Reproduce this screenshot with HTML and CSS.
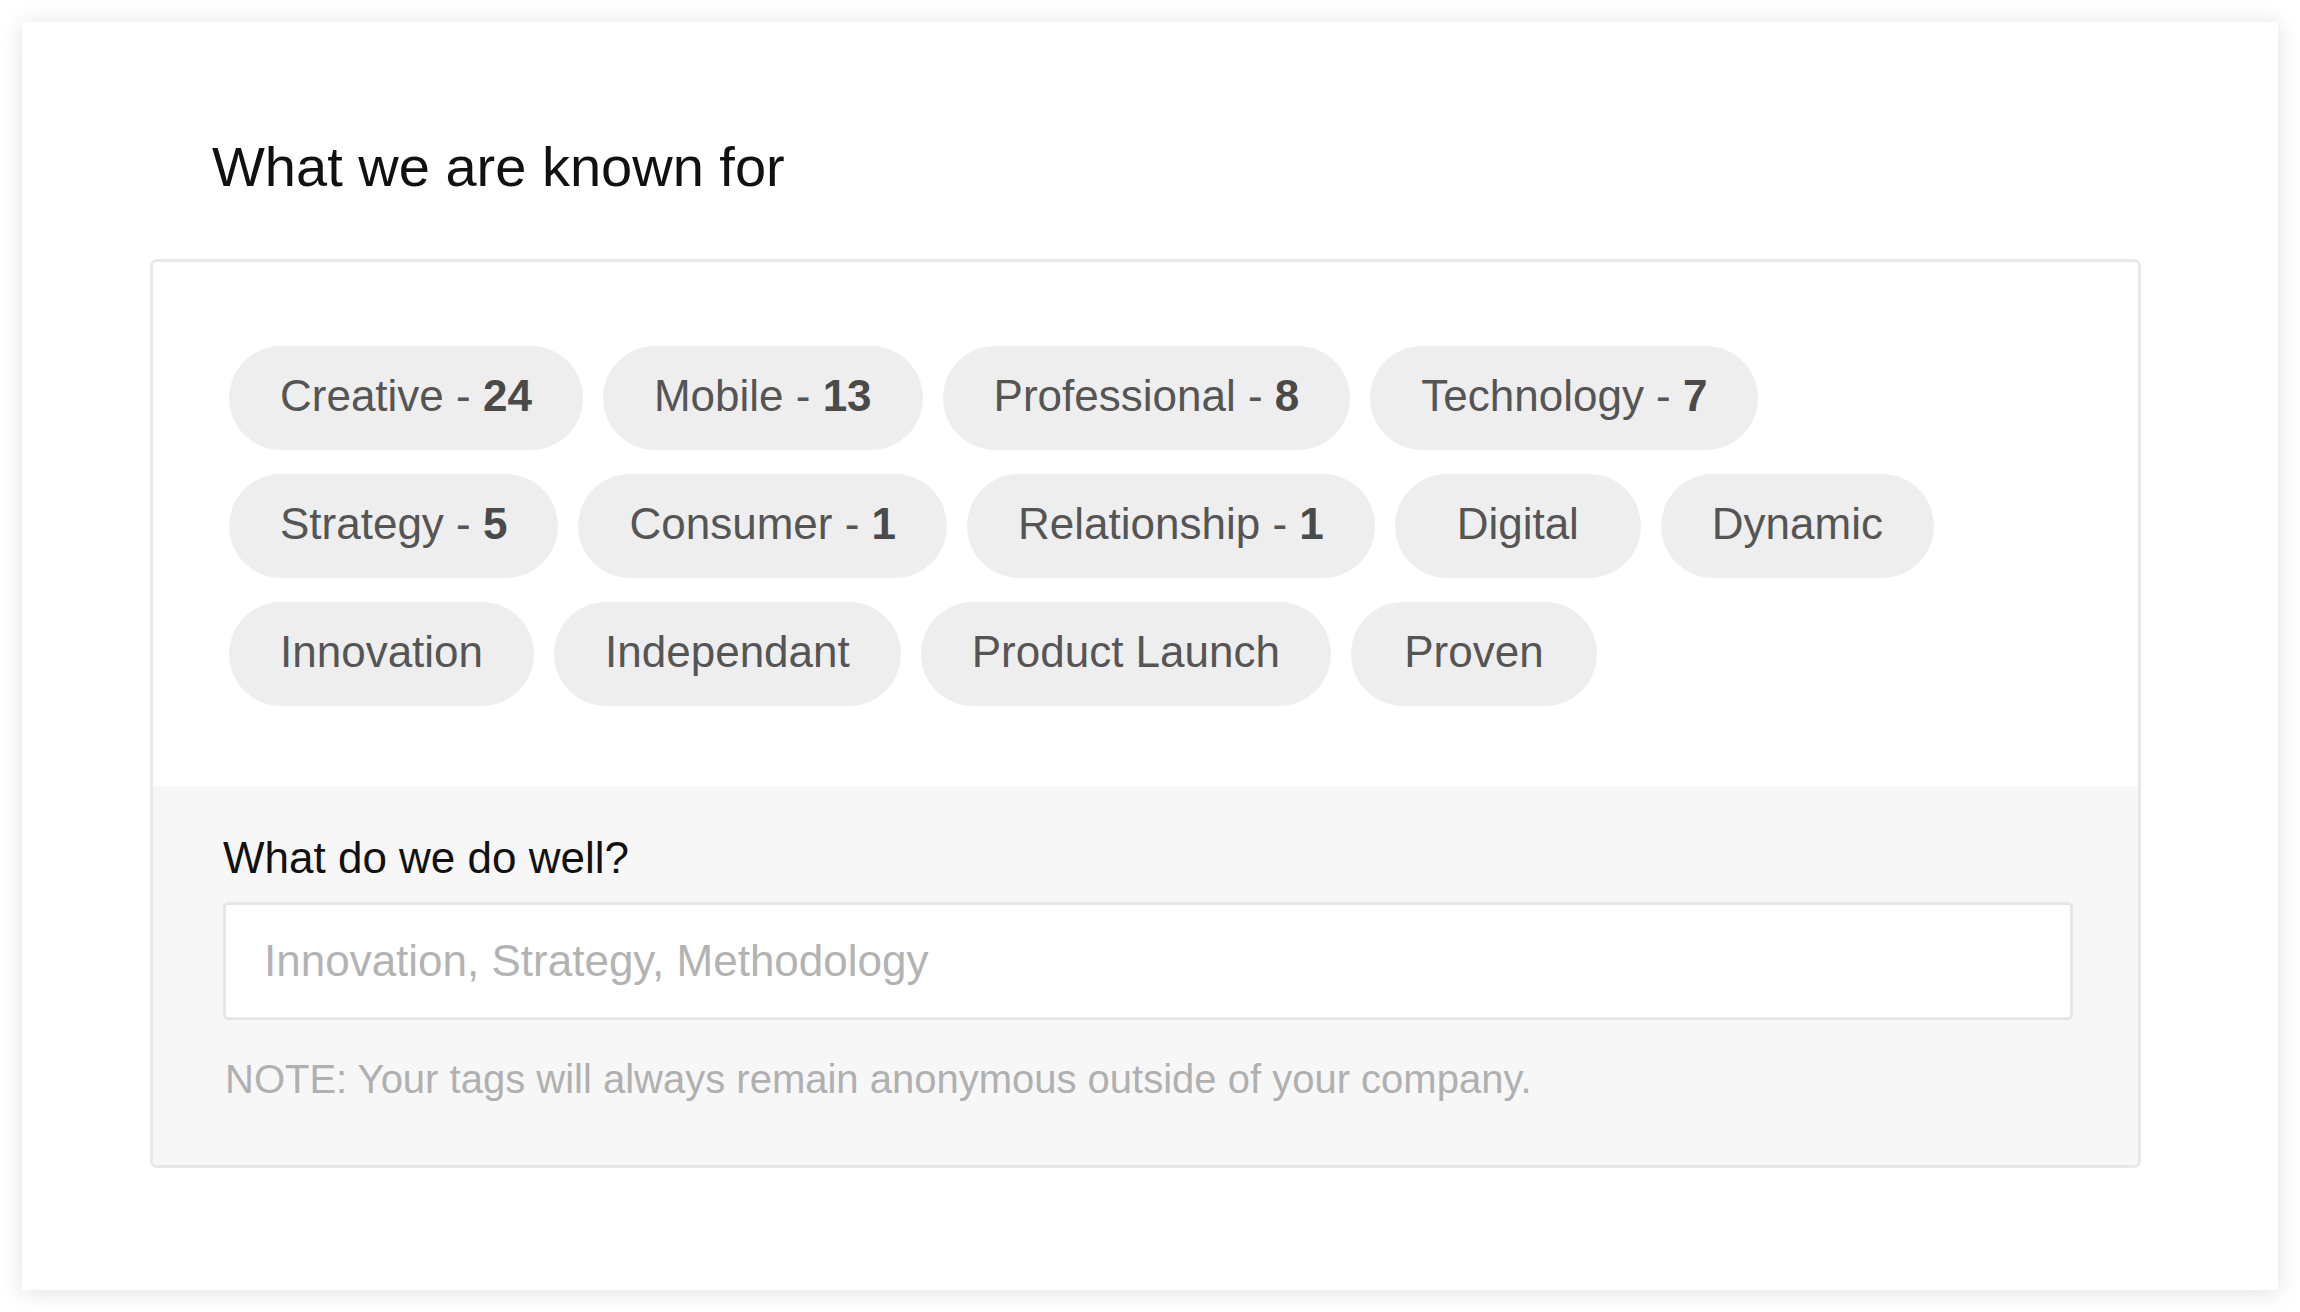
FILE: index.html
```html
<!DOCTYPE html>
<html lang="en">
<head>
<meta charset="utf-8">
<title>What we are known for</title>
<link rel="stylesheet" href="styles.css">
</head>
<body>
<main class="card">
  <h1 class="title">What we are known for</h1>
  <section class="panel">
    <div class="tags">
      <span class="tag">Creative - <b>24</b></span>
      <span class="tag">Mobile - <b>13</b></span>
      <span class="tag">Professional - <b>8</b></span>
      <span class="tag">Technology - <b>7</b></span>
      <span class="tag">Strategy - <b>5</b></span>
      <span class="tag">Consumer - <b>1</b></span>
      <span class="tag">Relationship - <b>1</b></span>
      <span class="tag">Digital</span>
      <span class="tag">Dynamic</span>
      <span class="tag">Innovation</span>
      <span class="tag">Independant</span>
      <span class="tag">Product Launch</span>
      <span class="tag">Proven</span>
    </div>
    <div class="entry">
      <label class="label" for="well">What do we do well?</label>
      <input class="field" id="well" type="text" placeholder="Innovation, Strategy, Methodology">
      <p class="note">NOTE: Your tags will always remain anonymous outside of your company.</p>
    </div>
  </section>
</main>
</body>
</html>
```

FILE: styles.css
```css
* { box-sizing: border-box; }

html, body {
  margin: 0;
  background: #ffffff;
}

body {
  padding: 22px;
  font-family: "Liberation Sans", Arial, Helvetica, sans-serif;
}

.card {
  width: 2256px;
  background: #ffffff;
  box-shadow: 0 2px 22px rgba(0, 0, 0, 0.13);
  padding: 117px 137px 122px 128px;
}

.title {
  margin: 0 0 64px 62px;
  font-size: 56px;
  line-height: 56px;
  font-weight: 400;
  color: #111111;
}

.panel {
  border: 3px solid #e8e8e8;
  border-radius: 7px;
  overflow: hidden;
  background: #ffffff;
}

.tags {
  display: flex;
  flex-wrap: wrap;
  column-gap: 20px;
  row-gap: 24px;
  padding: 84px 150px 80px 76px;
}

.tag {
  display: inline-flex;
  align-items: center;
  justify-content: center;
  height: 104px;
  min-width: 246px;
  padding: 0 51px 4px;
  border-radius: 52px;
  background: #eeeeee;
  color: #555555;
  font-size: 44px;
  line-height: 1;
  white-space: pre;
}

.tag b {
  font-weight: 700;
  color: #4a4a4a;
}

.entry {
  background: #f7f7f7;
  padding: 47px 65px 63px 70px;
}

.label {
  display: block;
  font-size: 44px;
  line-height: 50px;
  color: #111111;
}

.field {
  display: block;
  width: 100%;
  height: 118px;
  margin-top: 19px;
  padding: 0 0 0 38px;
  border: 3px solid #e6e6e6;
  border-radius: 5px;
  background: #ffffff;
  font-family: "Liberation Sans", Arial, Helvetica, sans-serif;
  font-size: 44px;
  color: #333333;
  outline: none;
}

.field::placeholder {
  color: #b3b3b3;
}

.note {
  margin: 36px 0 0 2px;
  font-size: 40px;
  line-height: 46px;
  color: #b0b0b0;
}
```
